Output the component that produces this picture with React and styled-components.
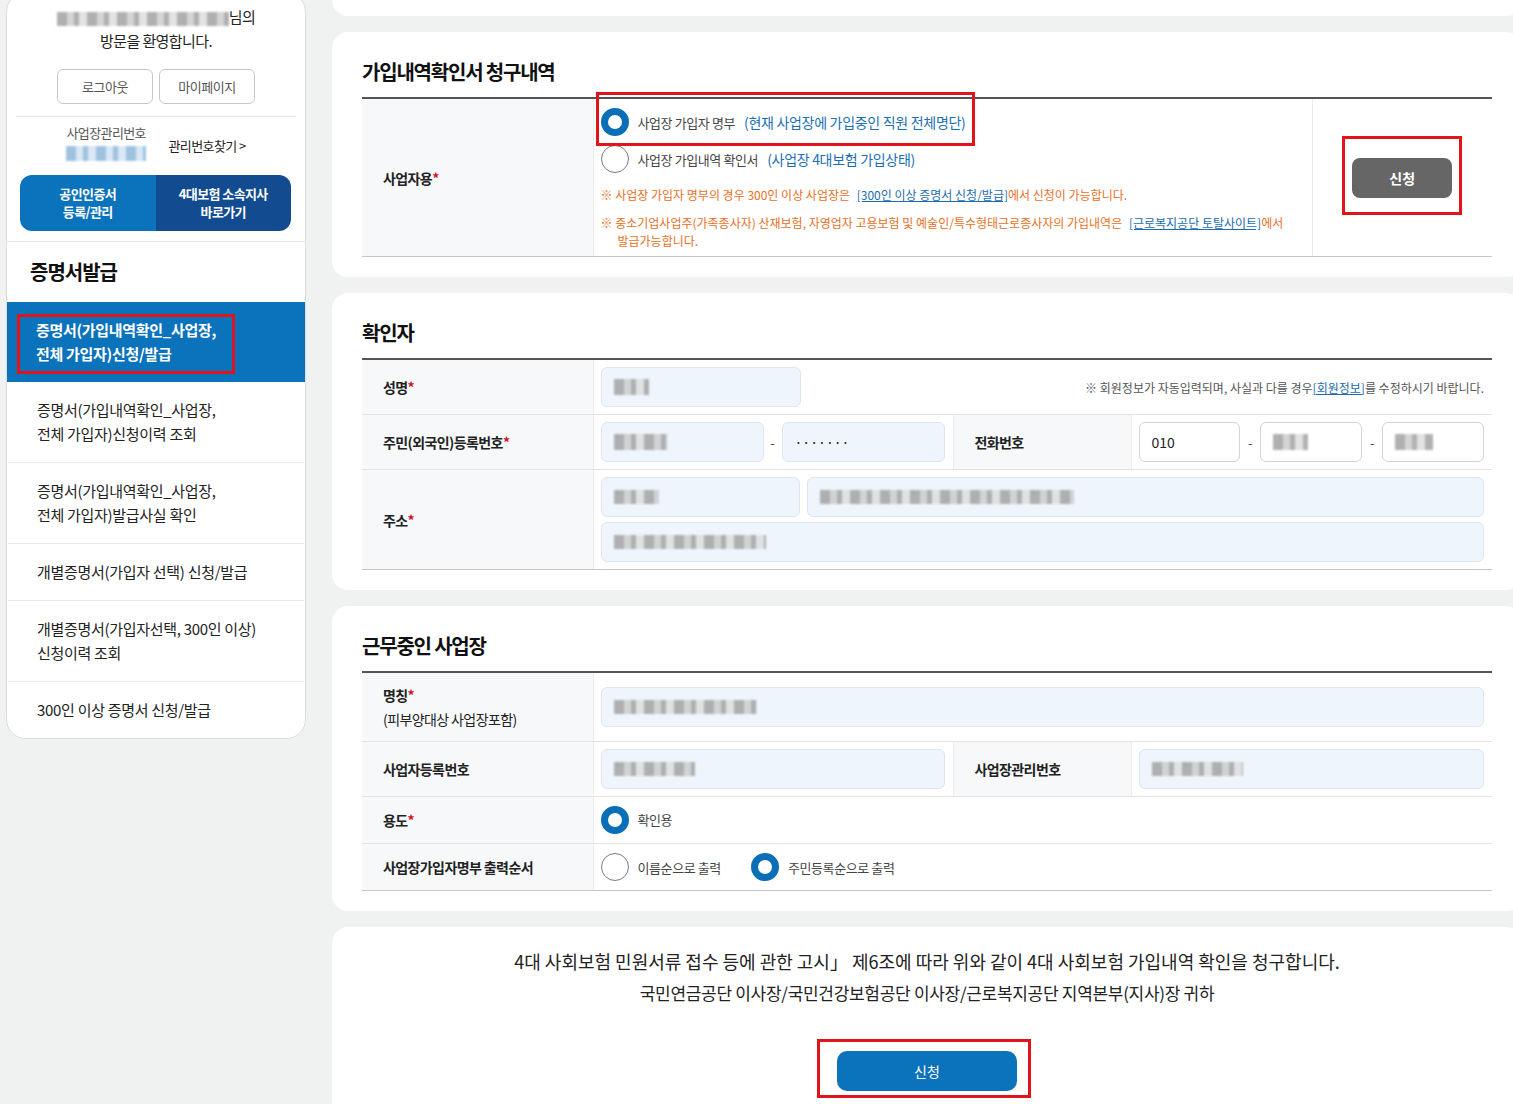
import React from 'react';
import styled, { createGlobalStyle } from 'styled-components';

const GlobalStyle = createGlobalStyle`
  html, body {
    margin: 0;
    padding: 0;
    background: #f0f2f2;
    overflow: hidden;
  }
  body {
    font-family: "Noto Sans CJK KR", "Noto Sans", sans-serif;
    color: #222;
  }
  * { box-sizing: border-box; }
`;

const Page = styled.div`
  display: flex;
  align-items: flex-start;
  gap: 26px;
  padding-left: 6px;
  width: 1522px;
`;

/* ---------- sidebar ---------- */

const Side = styled.aside`
  width: 300px;
  flex: none;
  margin-top: -8px;
  background: #fff;
  border: 1px solid #dcdcdc;
  border-radius: 20px;
  overflow: hidden;
`;

const Welcome = styled.div`
  padding-top: 12px;
  text-align: center;
  font-size: 15px;
  line-height: 24px;
  letter-spacing: -0.6px;
  color: #222;
`;

const Blur = styled.span`
  display: inline-block;
  vertical-align: middle;
  width: ${p => p.$w}px;
  height: ${p => p.$h || 16}px;
  background: repeating-linear-gradient(
    90deg,
    ${p => p.$a || '#a3a3a3'} 0 10px,
    ${p => p.$b || '#cdcdcd'} 10px 17px,
    ${p => p.$a || '#a3a3a3'} 17px 22px,
    ${p => p.$b || '#dedede'} 22px 30px
  );
  filter: blur(1.2px);
  opacity: 0.85;
`;

const BtnRow = styled.div`
  display: flex;
  justify-content: center;
  gap: 6px;
  margin-top: 16px;
`;

const SmallBtn = styled.button`
  width: 96px;
  height: 35px;
  border: 1px solid #c8c8c8;
  border-radius: 6px;
  background: #fff;
  font: inherit;
  font-size: 13px;
  color: #555;
  letter-spacing: -0.5px;
`;

const Divider = styled.div`
  height: 1px;
  background: #e6e6e6;
  margin: ${p => p.$m || '0'};
`;

const NumberRow = styled.div`
  display: flex;
  justify-content: center;
  align-items: center;
  gap: 22px;
  margin-top: 6px;
`;

const NumberCol = styled.div`
  display: flex;
  flex-direction: column;
  gap: 3px;
  font-size: 13px;
  line-height: 20px;
  color: #555;
  letter-spacing: -0.6px;
`;

const FindLink = styled.a`
  font-size: 13px;
  color: #222;
  letter-spacing: -0.6px;
  text-decoration: none;
  margin-top: 6px;
`;

const QuickBtns = styled.div`
  display: flex;
  margin: 14px 14px 0 13px;
  height: 56px;
  border-radius: 12px;
  overflow: hidden;
`;

const QuickBtn = styled.button`
  flex: 1;
  border: 0;
  background: ${p => (p.$dark ? '#134b91' : '#0b72bc')};
  color: #fff;
  font: inherit;
  font-size: 13px;
  font-weight: 700;
  line-height: 18px;
  letter-spacing: -0.6px;
`;

const SideTitle = styled.h2`
  margin: 0;
  height: 60px;
  line-height: 60px;
  padding-left: 23px;
  font-size: 20px;
  font-weight: 700;
  letter-spacing: -1px;
  color: #111;
`;

const MenuItem = styled.a`
  display: block;
  padding: 16px 29px;
  font-size: 15px;
  line-height: 24px;
  letter-spacing: -0.3px;
  text-decoration: none;
  color: ${p => (p.$active ? '#fff' : '#222')};
  font-weight: ${p => (p.$active ? 700 : 400)};
  background: ${p => (p.$active ? '#0b72bc' : '#fff')};
  border-top: ${p => (p.$active || p.$afterActive ? '0' : '1px solid #e8e8e8')};
  margin: 0 ${p => (p.$active ? 0 : '1px')};
`;

/* red annotation frame laid over an element */
const Mark = styled.span`
  position: relative;
  display: ${p => (p.$block ? 'block' : 'inline-flex')};
  &::after {
    content: '';
    position: absolute;
    top: ${p => p.$t}px;
    right: ${p => p.$r}px;
    bottom: ${p => p.$b}px;
    left: ${p => p.$l}px;
    border: 3px solid #e1141c;
    pointer-events: none;
    z-index: 2;
  }
`;

/* ---------- main ---------- */

const Main = styled.main`
  width: 1190px;
  flex: none;
  display: flex;
  flex-direction: column;
  gap: 16px;
`;

const Stub = styled.div`
  height: 16px;
  background: #fff;
  border-radius: 0 0 16px 16px;
`;

const Card = styled.section`
  background: #fff;
  border-radius: 16px;
  padding: 26px 30px 20px;
`;

const Title = styled.h3`
  margin: 0 0 11px;
  font-size: 20px;
  line-height: 28px;
  font-weight: 700;
  letter-spacing: -1.2px;
  color: #111;
`;

const Table = styled.table`
  width: 100%;
  table-layout: fixed;
  border-collapse: collapse;
  border-top: 2px solid #555;
  tr:last-child > * {
    border-bottom-color: #c6c6c6;
  }
`;

const Th = styled.th`
  background: #f7f8fa;
  text-align: left;
  vertical-align: middle;
  padding: ${p => p.$pad || '0 21px'};
  font-size: 14px;
  line-height: 24px;
  font-weight: 700;
  letter-spacing: -0.6px;
  color: #222;
  border-bottom: 1px solid #e3e3e3;
  border-right: 1px solid #ececec;
  border-left: ${p => (p.$sep ? '1px solid #ececec' : '0')};
`;

const Sub = styled.span`
  display: block;
  font-weight: 400;
`;

const Req = styled.span`
  color: #d4101b;
`;

const Td = styled.td`
  vertical-align: middle;
  padding: ${p => p.$pad || '7px 8px 7px 7px'};
  border-bottom: 1px solid #e3e3e3;
  height: ${p => (p.$h ? `${p.$h}px` : 'auto')};
`;

const Field = styled.div`
  display: flex;
  align-items: center;
  height: 40px;
  width: ${p => (p.$w ? `${p.$w}px` : '100%')};
  flex: ${p => (p.$w ? 'none' : '1 1 0')};
  min-width: 0;
  padding: 0 12px;
  border-radius: 6px;
  border: 1px solid ${p => (p.$white ? '#d4d4d4' : '#dce6f2')};
  background: ${p => (p.$white ? '#fff' : '#eef5fd')};
  font-size: 14px;
  color: #222;
`;

const Line = styled.div`
  display: flex;
  align-items: center;
  gap: ${p => p.$gap ?? 7}px;
  justify-content: ${p => (p.$between ? 'space-between' : 'flex-start')};
`;

const Stack = styled.div`
  display: grid;
  gap: 5px;
`;

const Dash = styled.span`
  flex: none;
  width: ${p => p.$w || 18}px;
  text-align: center;
  font-size: 13px;
  color: #444;
`;

const Hint = styled.span`
  font-size: 12px;
  color: #555;
  letter-spacing: 0;
  a {
    color: #1b6bb0;
    text-decoration: underline;
  }
`;

const RadioLabel = styled.label`
  display: inline-flex;
  align-items: center;
  gap: 9px;
  height: 36px;
  font-size: 13px;
  color: #444;
  letter-spacing: -0.4px;
  white-space: nowrap;
`;

const Circle = styled.span`
  flex: none;
  width: 28px;
  height: 28px;
  border-radius: 50%;
  background: #fff;
  border: ${p => (p.$on ? '7px solid #0b6fb7' : '1px solid #7a7a7a')};
`;

const Blue = styled.span`
  font-size: 14px;
  color: #1a6fb5;
  letter-spacing: -0.3px;
`;

const Radios = styled.div`
  display: flex;
  align-items: center;
  gap: 30px;
`;

const RadioList = styled.div`
  display: flex;
  flex-direction: column;
`;

const Note = styled.p`
  margin: ${p => p.$m || '0'};
  font-size: 12px;
  line-height: 18px;
  color: #e8701e;
  letter-spacing: 0;
  padding-left: 17px;
  text-indent: -17px;
  a {
    color: #1b6bb0;
    text-decoration: underline;
    margin-left: 4px;
  }
`;

const ActionCell = styled.td`
  text-align: center;
  vertical-align: middle;
  border-bottom: 1px solid #e3e3e3;
  border-left: 1px solid #ececec;
`;

const GrayBtn = styled.button`
  width: 100px;
  height: 40px;
  border: 0;
  border-radius: 8px;
  background: #666;
  color: #fff;
  font: inherit;
  font-size: 14px;
  font-weight: 700;
`;

const Footer = styled.section`
  background: #fff;
  border-radius: 16px 16px 0 0;
  padding: 20px 30px 40px;
  text-align: center;
`;

const Decl = styled.p`
  margin: 0;
  font-size: 18px;
  line-height: 28px;
  letter-spacing: 0;
  color: #222;
`;

const Addr = styled.p`
  margin: 6px 0 0;
  font-size: 17px;
  line-height: 24px;
  letter-spacing: -0.3px;
  color: #222;
`;

const ApplyWrap = styled.div`
  margin-top: 46px;
  display: flex;
  justify-content: center;
`;

const BlueBtn = styled.button`
  width: 180px;
  height: 40px;
  border: 0;
  border-radius: 10px;
  background: #0b72bc;
  color: #fff;
  font: inherit;
  font-size: 14px;
`;

const menu = [
  ['증명서(가입내역확인_사업장,', '전체 가입자)신청이력 조회'],
  ['증명서(가입내역확인_사업장,', '전체 가입자)발급사실 확인'],
  ['개별증명서(가입자 선택) 신청/발급'],
  ['개별증명서(가입자선택, 300인 이상)', '신청이력 조회'],
  ['300인 이상 증명서 신청/발급'],
];

function Sidebar() {
  return (
    <Side>
      <Welcome>
        <div>
          <Blur $w={172} $h={14} />님의
        </div>
        <div>방문을 환영합니다.</div>
      </Welcome>
      <BtnRow>
        <SmallBtn>로그아웃</SmallBtn>
        <SmallBtn>마이페이지</SmallBtn>
      </BtnRow>
      <Divider $m="12px 9px 0" />
      <NumberRow>
        <NumberCol>
          <span>사업장관리번호</span>
          <Blur $w={80} $h={15} $a="#8fb8dc" $b="#d3e4f3" />
        </NumberCol>
        <FindLink>관리번호찾기 &gt;</FindLink>
      </NumberRow>
      <QuickBtns>
        <QuickBtn>공인인증서<br />등록/관리</QuickBtn>
        <QuickBtn $dark>4대보험 소속지사<br />바로가기</QuickBtn>
      </QuickBtns>
      <Divider $m="10px 0 0" />
      <SideTitle>증명서발급</SideTitle>
      <MenuItem $active>
        <Mark $t={-4} $r={-19} $b={-8} $l={-19}>
          <span>증명서(가입내역확인_사업장,<br />전체 가입자)신청/발급</span>
        </Mark>
      </MenuItem>
      {menu.map((lines, i) => (
        <MenuItem key={i} $afterActive={i === 0}>
          {lines.map((l, j) => (
            <div key={j}>{l}</div>
          ))}
        </MenuItem>
      ))}
    </Side>
  );
}

function Radio({ on, children }) {
  return (
    <RadioLabel>
      <Circle $on={on} />
      {children}
    </RadioLabel>
  );
}

function RequestCard() {
  return (
    <Card>
      <Title>가입내역확인서 청구내역</Title>
      <Table>
        <colgroup>
          <col style={{ width: 231 }} />
          <col />
          <col style={{ width: 180 }} />
        </colgroup>
        <tbody>
          <tr>
            <Th>사업자용<Req>*</Req></Th>
            <Td $pad="5px 8px 6px 7px" $h={158}>
              <RadioList>
                <div>
                  <Mark $t={-12} $r={-9} $b={-6} $l={-5}>
                    <Radio on>
                      사업장 가입자 명부 <Blue>(현재 사업장에 가입중인 직원 전체명단)</Blue>
                    </Radio>
                  </Mark>
                </div>
                <div>
                  <Radio>
                    사업장 가입내역 확인서 <Blue>(사업장 4대보험 가입상태)</Blue>
                  </Radio>
                </div>
              </RadioList>
              <Note $m="8px 0 0">
                ※ 사업장 가입자 명부의 경우 300인 이상 사업장은 <a>[300인 이상 증명서 신청/발급]</a>에서 신청이 가능합니다.
              </Note>
              <Note $m="10px 0 0">
                ※ 중소기업사업주(가족종사자) 산재보험, 자영업자 고용보험 및 예술인/특수형태근로종사자의 가입내역은 <a>[근로복지공단 토탈사이트]</a>에서<br />발급가능합니다.
              </Note>
            </Td>
            <ActionCell>
              <Mark $t={-22} $r={-10} $b={-17} $l={-10}>
                <GrayBtn>신청</GrayBtn>
              </Mark>
            </ActionCell>
          </tr>
        </tbody>
      </Table>
    </Card>
  );
}

function FourCols() {
  return (
    <colgroup>
      <col style={{ width: 231 }} />
      <col style={{ width: 360 }} />
      <col style={{ width: 178 }} />
      <col />
    </colgroup>
  );
}

function PersonCard() {
  return (
    <Card>
      <Title>확인자</Title>
      <Table>
        <FourCols />
        <tbody>
          <tr>
            <Th>성명<Req>*</Req></Th>
            <Td colSpan={3}>
              <Line $between>
                <Field $w={200}><Blur $w={35} $h={16} /></Field>
                <Hint>
                  ※ 회원정보가 자동입력되며, 사실과 다를 경우<a>[회원정보]</a>를 수정하시기 바랍니다.
                </Hint>
              </Line>
            </Td>
          </tr>
          <tr>
            <Th>주민(외국인)등록번호<Req>*</Req></Th>
            <Td>
              <Line $gap={0}>
                <Field><Blur $w={54} $h={16} /></Field>
                <Dash>-</Dash>
                <Field>·······</Field>
              </Line>
            </Td>
            <Th $sep>전화번호</Th>
            <Td>
              <Line $gap={0}>
                <Field $white>010</Field>
                <Dash $w={20}>-</Dash>
                <Field $white><Blur $w={35} $h={16} /></Field>
                <Dash $w={20}>-</Dash>
                <Field $white><Blur $w={38} $h={16} /></Field>
              </Line>
            </Td>
          </tr>
          <tr>
            <Th>주소<Req>*</Req></Th>
            <Td colSpan={3}>
              <Stack>
                <Line>
                  <Field $w={199}><Blur $w={45} $h={14} /></Field>
                  <Field><Blur $w={254} $h={14} /></Field>
                </Line>
                <Field><Blur $w={152} $h={14} /></Field>
              </Stack>
            </Td>
          </tr>
        </tbody>
      </Table>
    </Card>
  );
}

function WorkplaceCard() {
  return (
    <Card>
      <Title>근무중인 사업장</Title>
      <Table>
        <FourCols />
        <tbody>
          <tr>
            <Th $pad="10px 21px">
              명칭<Req>*</Req>
              <Sub>(피부양대상 사업장포함)</Sub>
            </Th>
            <Td colSpan={3}>
              <Field><Blur $w={143} $h={14} /></Field>
            </Td>
          </tr>
          <tr>
            <Th>사업자등록번호</Th>
            <Td>
              <Field><Blur $w={81} $h={14} /></Field>
            </Td>
            <Th $sep>사업장관리번호</Th>
            <Td>
              <Field><Blur $w={91} $h={14} /></Field>
            </Td>
          </tr>
          <tr>
            <Th>용도<Req>*</Req></Th>
            <Td colSpan={3} $pad="0 7px" $h={47}>
              <Radio on>확인용</Radio>
            </Td>
          </tr>
          <tr>
            <Th>사업장가입자명부 출력순서</Th>
            <Td colSpan={3} $pad="0 7px" $h={47}>
              <Radios>
                <Radio>이름순으로 출력</Radio>
                <Radio on>주민등록순으로 출력</Radio>
              </Radios>
            </Td>
          </tr>
        </tbody>
      </Table>
    </Card>
  );
}

export default function App() {
  return (
    <>
      <GlobalStyle />
      <Page>
        <Sidebar />
        <Main>
          <Stub />
          <RequestCard />
          <PersonCard />
          <WorkplaceCard />
          <Footer>
            <Decl>
              4대 사회보험 민원서류 접수 등에 관한 고시」 제6조에 따라 위와 같이 4대 사회보험 가입내역 확인을 청구합니다.
            </Decl>
            <Addr>국민연금공단 이사장/국민건강보험공단 이사장/근로복지공단 지역본부(지사)장 귀하</Addr>
            <ApplyWrap>
              <Mark $t={-12} $r={-14} $b={-7} $l={-20}>
                <BlueBtn>신청</BlueBtn>
              </Mark>
            </ApplyWrap>
          </Footer>
        </Main>
      </Page>
    </>
  );
}
